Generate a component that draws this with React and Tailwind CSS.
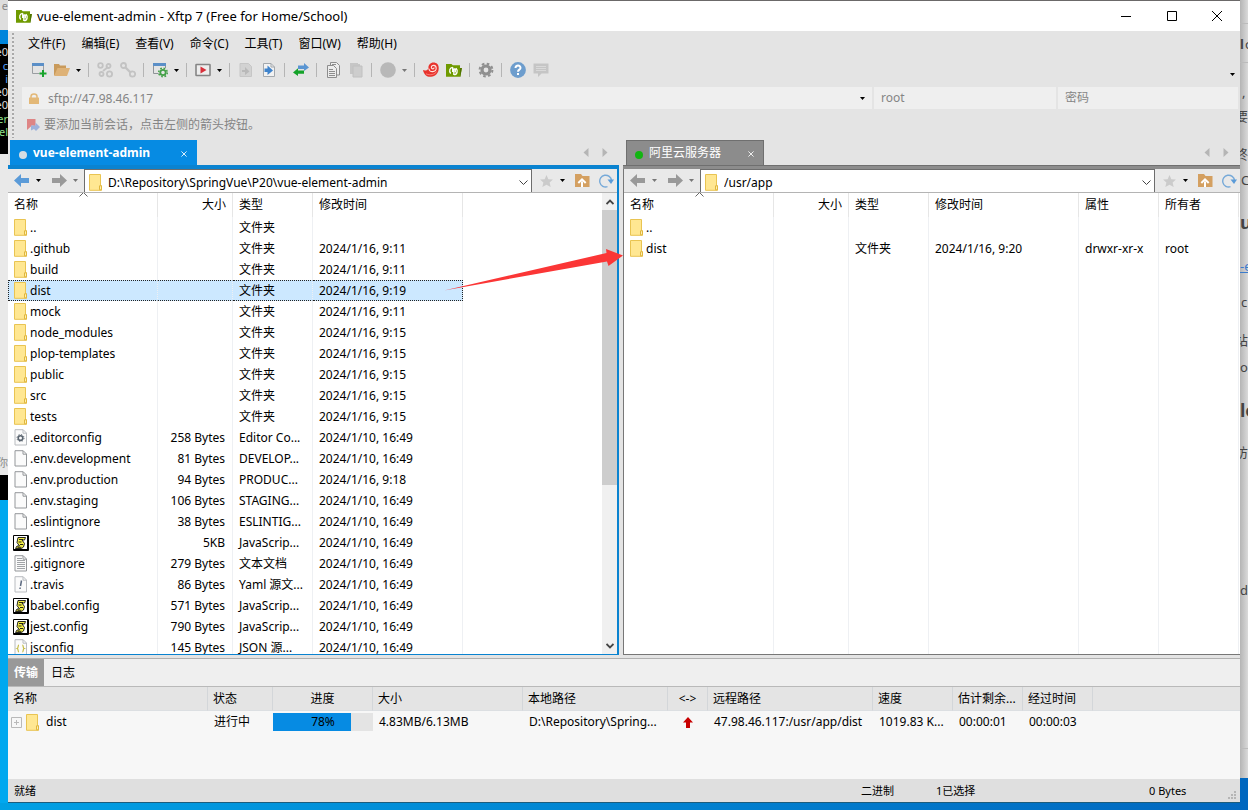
import React from 'react';

const FONT = 'font-["Noto_Sans","Noto_Sans_CJK_SC",sans-serif]';

function Caret({ className = 'text-black' }) {
  return (
    <svg width="5" height="3" viewBox="0 0 5 3" className={className} aria-hidden="true">
      <path d="M0 0h5L2.5 3z" fill="currentColor" />
    </svg>
  );
}

function FolderIcon() {
  return (
    <svg width="14" height="17" viewBox="0 0 14 17" className="shrink-0" aria-hidden="true">
      <path d="M.5.5h11v11.3h1v4.5H.5z" fill="#ffe792" stroke="#e9c452" />
      <path d="M10.5 15.8v-4h2v4z" fill="#fff0b0" stroke="#e0b63c" />
    </svg>
  );
}

function PageIcon({ children, light }) {
  return (
    <svg width="14" height="17" viewBox="0 0 14 17" className="shrink-0" aria-hidden="true">
      <path d="M1 .7h8.2l3.3 3.3v12H1z" fill="#fbfbfb" stroke={light ? '#b9bcc0' : '#94979a'} />
      <path d="M9 .9V4.200h3.300" fill="none" stroke={light ? '#b9bcc0' : '#94979a'} />
      {children}
    </svg>
  );
}

function ScriptIcon() {
  return (
    <svg width="16" height="16" viewBox="0 0 16 16" className="shrink-0" aria-hidden="true">
      <path d="M.5.500h15v15H.5z" fill="#fff" stroke="#000" />
      <path d="M14.500 1v14.500M1 14.500h14" stroke="#000" />
      <path d="M5 2.500h7.500l-1 2.500H9l2.500 3.500-1 3.500-2 1.500H2.500l1.500-2.500h2.500L4 7.500z" fill="#f3ee4a" stroke="#111" strokeWidth=".9" />
      <path d="M6 4.500h4M5.500 7h3M7 9.500h3M4.500 12.300h4" stroke="#111" strokeWidth=".9" />
    </svg>
  );
}

function FileIcon({ kind }) {
  if (kind === 'folder') return <FolderIcon />;
  if (kind === 'script') return <ScriptIcon />;
  if (kind === 'gear')
    return (
      <PageIcon light>
        <circle cx="6.500" cy="9" r="2.300" fill="none" stroke="#5b6570" strokeWidth="1.600" />
        <circle cx="6.500" cy="9" r="3.500" fill="none" stroke="#5b6570" strokeDasharray="1.300 1.450" />
      </PageIcon>
    );
  if (kind === 'text')
    return (
      <PageIcon>
        <path d="M3 5.500h8M3 7.500h8M3 9.500h8M3 11.500h8M3 13.500h8M3 3.500h5" stroke="#a1a4a7" />
      </PageIcon>
    );
  if (kind === 'yaml')
    return (
      <PageIcon light>
        <path d="M7.500 4.500 6.500 10M6.200 11.500 6 13" stroke="#5d6a80" strokeWidth="1.500" />
      </PageIcon>
    );
  if (kind === 'json')
    return (
      <PageIcon light>
        <path d="M5 6C3.500 6 4.800 9 3.200 9.500 4.800 10 3.500 13 5 13M8.300 6c1.500 0 .2 3 1.800 3.500-1.600.5-.3 3.500-1.800 3.500" fill="none" stroke="#c3b93e" strokeWidth="1.200" />
      </PageIcon>
    );
  return <PageIcon />;
}

function XftpLogo() {
  return (
    <svg width="16" height="13" viewBox="0 0 16 13" aria-hidden="true">
      <path d="M0 0h5.500l1.200 1.300H14V4h1.900L14.300 12.700H0z" fill="#6f9a00" />
      <path d="M14 4h1.900L14.300 12.700H14z" fill="#4f7300" />
      <path d="M6.700 3.200V8M6.700 3.300C3.700 3.300 2.800 7.200 4.700 9.500M7.800 11V5.200h1v-1M8 10.700C11.500 10.500 12 6.500 10 4.300M9.300 4.500v4" fill="none" stroke="#fff" strokeWidth="1.300" />
    </svg>
  );
}

const ICONS = {
  newSession: (
    <>
      <path d="M1.500 2v9.500h7M12.500 2v6" fill="none" stroke="#9a9ea2" />
      <path d="M1 1h12v3H1z" fill="#5b8fc7" />
      <path d="M12 8v7M8.500 11.500h7" stroke="#18a32c" strokeWidth="2" />
    </>
  ),
  open: (
    <>
      <path d="M0 2h5l1 1.500h6V13H0z" fill="#c99a5b" />
      <path d="M3.500 6H16l-3 8H0z" fill="#deb277" />
    </>
  ),
  reconnect: (
    <g fill="none" stroke="#c3c3c3" strokeWidth="1.800">
      <circle cx="3.500" cy="3.500" r="2.300" />
      <circle cx="11.500" cy="4" r="2" />
      <circle cx="4.500" cy="12" r="2" />
      <circle cx="12.500" cy="12" r="2.600" />
      <path d="M6 9l5-4" />
    </g>
  ),
  disconnect: (
    <g fill="none" stroke="#c3c3c3" strokeWidth="1.800">
      <circle cx="3.500" cy="3.500" r="2.500" />
      <circle cx="12.500" cy="12" r="2.700" />
      <path d="M5.500 5.500l5 5" strokeWidth="2.400" />
    </g>
  ),
  properties: (
    <>
      <path d="M1.500 2v9.500h5M13.500 2v4" fill="none" stroke="#8f9498" />
      <path d="M1 1h13v3H1z" fill="#5b8fc7" />
      <circle cx="11" cy="10.500" r="2.700" fill="none" stroke="#43a047" strokeWidth="1.800" />
      <circle cx="11" cy="10.500" r="4.300" fill="none" stroke="#43a047" strokeWidth="1.500" strokeDasharray="1.700 1.680" />
    </>
  ),
  run: (
    <>
      <rect x="1" y="2.500" width="14" height="11" rx=".5" fill="#ededed" stroke="#858585" strokeWidth="1.600" />
      <path d="M5.500 4.500 11.500 8l-6 3.500z" fill="#d8303b" />
    </>
  ),
  local: (
    <>
      <path d="M2 1.500h8.500l3 3v10H2z" fill="#d2d2d2" stroke="#c6c6c6" />
      <path d="M4 8h3V5l4.500 4.500L7 13v-3H4z" fill="#b9b9b9" />
    </>
  ),
  remote: (
    <>
      <path d="M2.500 1.500H10l3.500 3.500v9.500h-11z" fill="#f2f2f2" stroke="#a3a8ad" />
      <path d="M10 1.500V5h3.500" fill="none" stroke="#a3a8ad" />
      <path d="M3.500 6.500h3v-3L12 8.500l-5.500 4.500v-3h-3z" fill="#3f83cc" />
    </>
  ),
  sync: (
    <>
      <path d="M5 3.500h6V1l5 4.500L11 9V7H5z" fill="#5a95d2" />
      <path d="M11 8.500H5V6.200L0 10.500 5 14v-2.200h6z" fill="#15a32a" />
    </>
  ),
  copy: (
    <>
      <path d="M5.500.500h6l3 3V13h-9z" fill="#ececec" stroke="#8d8d8d" />
      <path d="M2.500 3.500h6l3 3v9h-9z" fill="#ececec" stroke="#8d8d8d" />
      <path d="M4 7.500h4M4 9.500h6M4 11.500h6M4 13.500h6M7 2.500h4" stroke="#8d8d8d" />
    </>
  ),
  paste: (
    <>
      <path d="M2 1h8v1h2v10H2z" fill="#c6c6c6" />
      <path d="M5 4h9v11H5z" fill="#cdcdcd" stroke="#c0c0c0" />
    </>
  ),
  stop: <circle cx="8" cy="8" r="7.800" fill="#b8b8b8" />,
  shell: (
    <>
      <path d="M0 8C1 13.500 5 15.300 8 14.700 12.500 14.500 15.600 11 15.700 6.500 16 2.500 13.500.5 10.500.5 7.500.5 5 3 5.500 6.200 4.500 8.500 2 9 0 8z" fill="#e8332d" />
      <path d="M5.700 6.500c1 4.500 7.300 4 7.500-.2C13.200 2.800 8.600 2.400 8.300 5.300c0 2 2.800 2.200 2.800.3" fill="none" stroke="#ffe3e0" strokeWidth="1.100" />
      <path d="M3 11.800c4 2 9 .7 10.700-2.300" fill="none" stroke="#ff9e98" strokeWidth=".7" />
    </>
  ),
  gear: (
    <>
      <circle cx="8" cy="8" r="4" fill="none" stroke="#909090" strokeWidth="3.200" />
      <circle cx="8" cy="8" r="6.400" fill="none" stroke="#909090" strokeWidth="2" strokeDasharray="2.600 2.427" />
    </>
  ),
  help: (
    <>
      <circle cx="8" cy="8" r="7.900" fill="#6d9dcd" />
      <path d="M5.500 6c0-3.400 5.200-3.200 5 0-.1 1.700-2.500 1.600-2.500 3.700M8 11v2" fill="none" stroke="#fff" strokeWidth="2" />
    </>
  ),
  chat: (
    <>
      <path d="M.5 1.500h15v10H8.500L5 15v-3.500H.5z" fill="#c5c5c5" />
      <path d="M3 4.500h10M3 6.500h10M3 8.500h10" stroke="#d9d9d9" />
    </>
  ),
};

const TOOLBAR = [
  ['newSession', '新建'], ['open', '打开'], 'caret', 'sep',
  ['reconnect', '重新连接'], ['disconnect', '断开'], 'sep',
  ['properties', '属性'], 'caret', 'sep',
  ['run', '运行'], 'caret', 'sep',
  ['local', '本地'], ['remote', '远程'], 'sep',
  ['sync', '同步'], 'sep',
  ['copy', '复制'], ['paste', '粘贴'], 'sep',
  ['stop', '停止'], 'dimCaret', 'sep',
  ['shell', 'Xshell'], ['xftp', 'Xftp'], 'sep',
  ['gear', '选项'], 'sep',
  ['help', '帮助'], ['chat', '反馈'],
];

function Toolbar() {
  return (
    <div className="flex h-7 items-center pl-[13px]">
      {TOOLBAR.map((item, i) => {
        if (item === 'sep')
          return (
            <span key={i} className="flex w-[9px] justify-center">
              <span className="h-[14px] w-px bg-[#b5b5b5]" />
            </span>
          );
        if (item === 'caret' || item === 'dimCaret')
          return (
            <button key={i} aria-label="更多" className="flex h-5 w-[11px] items-center justify-center">
              <Caret className={item === 'caret' ? 'text-black' : 'text-[#777]'} />
            </button>
          );
        return (
          <button key={i} aria-label={item[1]} className="flex h-5 w-[23px] items-center justify-center">
            {item[0] === 'xftp' ? <XftpLogo /> : (
              <svg width="16" height="16" viewBox="0 0 16 16" aria-hidden="true">{ICONS[item[0]]}</svg>
            )}
          </button>
        );
      })}
      <button aria-label="工具栏选项" className="mt-2 mr-1 ml-auto p-px"><Caret /></button>
    </div>
  );
}

function NavArrow({ back, active }) {
  return (
    <svg width="16" height="13" viewBox="0 0 16 13" className={active ? 'text-[#5b9bd8]' : 'text-[#999]'} aria-hidden="true">
      <path d={back ? 'M7 0v4h8v5H7v4L0 6.500z' : 'M9 0v4H1v5h8v4l7-6.500z'} fill="currentColor" />
    </svg>
  );
}

function TabScroll() {
  return (
    <div className="mr-[11px] ml-auto flex items-center gap-[13px] text-[#b5b5b5]">
      <button aria-label="上一个">
        <svg width="6" height="9" viewBox="0 0 6 9"><path d="M5.500 0v9L.5 4.500z" fill="currentColor" /></svg>
      </button>
      <button aria-label="下一个">
        <svg width="6" height="9" viewBox="0 0 6 9"><path d="M.5 0v9l5-4.500z" fill="currentColor" /></svg>
      </button>
    </div>
  );
}

function CloseGlyph() {
  return (
    <svg width="6" height="6" viewBox="0 0 7 7" aria-hidden="true">
      <path d="M.5.5l6 6M6.500.5l-6 6" stroke="#fff" />
    </svg>
  );
}

function NavBar({ path, local }) {
  return (
    <div className="flex h-[24px] shrink-0 items-center border-b border-[#b4b4b4] bg-[#e9e9e9]">
      <button aria-label="后退" className="ml-[6px]"><NavArrow back active={local} /></button>
      <button aria-label="后退历史" className="flex w-4 justify-center"><Caret className={local ? 'text-black' : 'text-[#777]'} /></button>
      <button aria-label="前进" className="ml-[5px]"><NavArrow /></button>
      <button aria-label="前进历史" className="flex w-4 justify-center"><Caret className="text-[#777]" /></button>
      <div className="ml-px flex h-full flex-1 items-center border border-b-0 border-[#6d6d6d] bg-white pt-[3px] pl-1">
        <FolderIcon />
        <input aria-label="路径" defaultValue={path} className="ml-[5px] h-5 min-w-0 flex-1 bg-transparent outline-none" />
        <button aria-label="展开路径" className="mr-[3px]">
          <svg width="9" height="5" viewBox="0 0 9 5"><path d="M.5.5l4 4 4-4" fill="none" stroke="#444" /></svg>
        </button>
      </div>
      <button aria-label="收藏" className="ml-2">
        <svg width="13" height="12" viewBox="0 0 14 13"><path d="M7 0l2 4.500 5 .5-3.600 3.200L11.500 13 7 10.500 2.500 13l1.100-4.800L0 5l5-.5z" fill="#cbcbcb" /></svg>
      </button>
      <button aria-label="收藏列表" className="flex w-[18px] justify-center"><Caret /></button>
      <button aria-label="上级目录" className="ml-1">
        <svg width="15" height="13" viewBox="0 0 15 13">
          <path d="M0 0h6l1.500 2H14.500v11H0z" fill="#d4a061" />
          <path d="M7 13V7.500M3.300 9 7 5.300 10.700 9" fill="none" stroke="#fff" strokeWidth="2" />
        </svg>
      </button>
      <button aria-label="刷新" className="mr-[3px] ml-[9px]">
        <svg width="15" height="14" viewBox="0 0 15 14">
          <path d="M8.500 12.700a5.900 5.900 0 1 1 4-6.200" fill="none" stroke="#76a9d8" strokeWidth="1.400" />
          <path d="M8.500 5.500H15L12 10z" fill="#5b9bd8" />
        </svg>
      </button>
    </div>
  );
}

const HEAD = 'relative h-6 border-r border-[#e6e6e6] px-[6px] text-left font-normal last:border-r-0';
const CELL = 'h-[21px] truncate border-r border-[#eef0f3] last:border-r-0';

function FileTable({ columns, rows, selected, label }) {
  return (
    <table aria-label={label} className="h-full w-full table-fixed border-separate border-spacing-0">
      <colgroup>
        {columns.map((c) => <col key={c.key} className={c.width} />)}
        <col />
      </colgroup>
      <thead>
        <tr>
          {columns.map((c) => (
            <th key={c.key} className={HEAD}>
              <span className={c.right ? 'block text-right' : 'block'}>{c.title}</span>
              {c.sorted && (
                <svg width="9" height="5" viewBox="0 0 9 5" className="absolute -top-px left-[71px]">
                  <path d="M.5 4.500l4-4 4 4" fill="none" stroke="#666" />
                </svg>
              )}
            </th>
          ))}
          <th className={HEAD} />
        </tr>
      </thead>
      <tbody>
        {rows.map((r) => {
          const on = r.name === selected;
          const tone = on ? ' border-y border-dotted border-y-[#222] bg-[#cce8ff] leading-[18px]' : ' leading-[20px]';
          return (
            <tr key={r.name} aria-selected={on}>
              {columns.map((c, i) => (
                <td
                  key={c.key}
                  className={
                    CELL + tone + (c.right ? ' pr-[7px] text-right' : c.key === 'name' ? ' pl-[5px]' : ' pl-[6px]') +
                    (on && i === 0 ? ' border-l !border-l-[#222]' : '') +
                    (on && i === columns.length - 1 ? ' !border-r-[#222]' : '')
                  }
                >
                  {c.key === 'name' ? (
                    <span className="flex items-center">
                      <span className={on ? '-ml-px flex w-4 shrink-0 justify-center' : 'flex w-4 shrink-0 justify-center'}>
                        <FileIcon kind={r.icon} />
                      </span>
                      <span className="ml-px">{r.name}</span>
                    </span>
                  ) : r[c.key]}
                </td>
              ))}
              <td className={CELL} />
            </tr>
          );
        })}
        <tr aria-hidden="true">
          {columns.map((c) => <td key={c.key} className="border-r border-[#eef0f3]" />)}
          <td />
        </tr>
      </tbody>
    </table>
  );
}

const f = (name, time) => ({ name, time, icon: 'folder', type: '文件夹' });
const LOCAL_ROWS = [
  f('..', ''),
  f('.github', '2024/1/16, 9:11'),
  f('build', '2024/1/16, 9:11'),
  f('dist', '2024/1/16, 9:19'),
  f('mock', '2024/1/16, 9:11'),
  f('node_modules', '2024/1/16, 9:15'),
  f('plop-templates', '2024/1/16, 9:15'),
  f('public', '2024/1/16, 9:15'),
  f('src', '2024/1/16, 9:15'),
  f('tests', '2024/1/16, 9:15'),
  { name: '.editorconfig', icon: 'gear', size: '258 Bytes', type: 'Editor Co...', time: '2024/1/10, 16:49' },
  { name: '.env.development', icon: 'page', size: '81 Bytes', type: 'DEVELOP...', time: '2024/1/10, 16:49' },
  { name: '.env.production', icon: 'page', size: '94 Bytes', type: 'PRODUC...', time: '2024/1/16, 9:18' },
  { name: '.env.staging', icon: 'page', size: '106 Bytes', type: 'STAGING...', time: '2024/1/10, 16:49' },
  { name: '.eslintignore', icon: 'page', size: '38 Bytes', type: 'ESLINTIG...', time: '2024/1/10, 16:49' },
  { name: '.eslintrc', icon: 'script', size: '5KB', type: 'JavaScrip...', time: '2024/1/10, 16:49' },
  { name: '.gitignore', icon: 'text', size: '279 Bytes', type: '文本文档', time: '2024/1/10, 16:49' },
  { name: '.travis', icon: 'yaml', size: '86 Bytes', type: 'Yaml 源文...', time: '2024/1/10, 16:49' },
  { name: 'babel.config', icon: 'script', size: '571 Bytes', type: 'JavaScrip...', time: '2024/1/10, 16:49' },
  { name: 'jest.config', icon: 'script', size: '790 Bytes', type: 'JavaScrip...', time: '2024/1/10, 16:49' },
  { name: 'jsconfig', icon: 'json', size: '145 Bytes', type: 'JSON 源...', time: '2024/1/10, 16:49' },
];
const REMOTE_ROWS = [
  { name: '..', icon: 'folder' },
  { name: 'dist', icon: 'folder', type: '文件夹', time: '2024/1/16, 9:20', mode: 'drwxr-xr-x', owner: 'root' },
];
const BASE_COLUMNS = [
  { key: 'name', title: '名称', width: 'w-[150px]', sorted: true },
  { key: 'size', title: '大小', width: 'w-[75px]', right: true },
  { key: 'type', title: '类型', width: 'w-[80px]' },
  { key: 'time', title: '修改时间', width: 'w-[150px]' },
];
const REMOTE_COLUMNS = [
  ...BASE_COLUMNS,
  { key: 'mode', title: '属性', width: 'w-[80px]' },
  { key: 'owner', title: '所有者', width: 'w-[80px]' },
];

function ScrollBar() {
  return (
    <div aria-hidden="true" className="flex w-[15px] shrink-0 flex-col bg-[#f0f0f0]">
      <span className="flex h-[17px] items-center justify-center">
        <svg width="8" height="6" viewBox="0 0 8 6"><path d="M.5 5 4 1.500 7.500 5" fill="none" stroke="#444" strokeWidth="1.800" /></svg>
      </span>
      <span className="flex-[276] bg-[#cdcdcd]" />
      <span className="flex-[153]" />
      <span className="flex h-4 items-center justify-center">
        <svg width="8" height="6" viewBox="0 0 8 6"><path d="M.5 1 4 4.500 7.500 1" fill="none" stroke="#444" strokeWidth="1.800" /></svg>
      </span>
    </div>
  );
}

const TRANSFER = [
  ['名称', 'w-[200px]'], ['状态', 'w-[65px]'], ['进度', 'w-[100px]'], ['大小', 'w-[150px]'], ['本地路径', 'w-[145px]'],
  ['<->', 'w-[40px]'], ['远程路径', 'w-[165px]'], ['速度', 'w-[80px]'], ['估计剩余...', 'w-[70px]'], ['经过时间', 'w-[70px]'],
];
const TD = 'h-[22px] truncate px-[6px]';

function TransferTable() {
  return (
    <table aria-label="传输" className="w-full table-fixed border-separate border-spacing-0">
      <colgroup>
        {TRANSFER.map(([t, w]) => <col key={t} className={w} />)}
        <col />
      </colgroup>
      <thead className="bg-[#e4e4e4]">
        <tr>
          {TRANSFER.map(([t], i) => (
            <th
              key={t}
              className={
                'h-6 truncate border-r border-b border-r-[#d3d6d9] border-b-[#dcdfe2] px-[5px] font-normal ' +
                (i === 2 || i === 5 ? 'text-center' : 'text-left')
              }
            >
              {t}
            </th>
          ))}
          <th className="border-b border-[#dcdfe2]" />
        </tr>
      </thead>
      <tbody>
        <tr>
          <td className="h-[22px] pl-[3px]">
            <span className="flex items-center">
              <button aria-label="展开" className="mr-1">
                <svg width="11" height="11" viewBox="0 0 11 11"><path d="M.5.5h10v10H.5zM3 5.500h5M5.500 3v5" fill="none" stroke="#b9b9b9" /></svg>
              </button>
              <FolderIcon />
              <span className="ml-[6px]">dist</span>
            </span>
          </td>
          <td className={TD}>进行中</td>
          <td className="h-[22px]">
            <div role="progressbar" aria-valuenow={78} aria-valuemin={0} aria-valuemax={100} className="relative h-[18px] bg-[#e4e4e4]">
              <div className="h-full bg-[#068be3]" style={{ width: '78%' }} />
              <span className="absolute inset-0 text-center leading-[17px]">78%</span>
            </div>
          </td>
          <td className={TD}>4.83MB/6.13MB</td>
          <td className={TD}>D:\Repository\Spring...</td>
          <td>
            <svg width="10" height="11" viewBox="0 0 10 11" className="mx-auto"><path d="M5 0l5 5.500H7V11H3V5.500H0z" fill="#c80000" /></svg>
          </td>
          <td className={TD}>47.98.46.117:/usr/app/dist</td>
          <td className={TD}>1019.83 K...</td>
          <td className={TD}>00:00:01</td>
          <td className={TD}>00:00:03</td>
          <td />
        </tr>
      </tbody>
    </table>
  );
}

function LeftDesktop() {
  return (
    <div aria-hidden="true" className="relative w-2 shrink-0 overflow-hidden bg-[#00a8ef] text-[11px] leading-3">
      <div className="h-[30px] bg-[#dedede]"><span className="absolute top-0 right-0 text-[#888]">e</span></div>
      <div className="h-[14px] bg-[#0085dc]" />
      <div className="h-[110px] bg-black" />
      <div className="h-[321px] bg-[#e9e9e9]" />
      <div className="h-[25px] bg-black" />
      <span className="absolute top-[46px] right-0 text-[#ddd]">e0</span>
      <span className="absolute top-[60px] right-0 text-[#59a3ff]">c</span>
      <span className="absolute top-[73px] right-0 text-[#59a3ff]">i</span>
      <span className="absolute top-[86px] right-0 text-[#ddd]">e0</span>
      <span className="absolute top-[99px] right-0 text-[#ddd]">e0</span>
      <span className="absolute top-[113px] right-0 text-[#8be08b]">er</span>
      <span className="absolute top-[126px] right-0 text-[#8be08b]">el</span>
      <span className="absolute top-[457px] right-0 text-[#888]">你</span>
    </div>
  );
}

function RightDesktop() {
  return (
    <div aria-hidden="true" className="relative w-2 shrink-0 overflow-hidden bg-[#0067bf] text-[13px] leading-5 whitespace-nowrap text-[#444]">
      <div className="h-[778px] bg-gradient-to-r from-[#b5b5b5] to-[#dadada]" />
      <span className="absolute inset-x-0 top-[23px] h-px bg-[#bbb]" />
      <span className="absolute inset-x-0 top-[62px] h-px bg-[#bbb]" />
      <span className="absolute inset-x-0 top-[748px] h-px bg-[#bbb]" />
      <span className="absolute top-[34px] left-0 font-bold">l</span>
      <span className="absolute top-[34px] left-[5px]">o</span>
      <span className="absolute top-[82px] left-[2px]">,</span>
      <span className="absolute top-[106px] left-[-5px]">要</span>
      <span className="absolute top-[144px] left-[-5px]">终</span>
      <span className="absolute top-[170px] left-[1px]">C</span>
      <span className="absolute top-[212px] left-0 text-[18px] font-bold">u</span>
      <span className="absolute top-[256px] left-0 text-[#3b7bcb] underline">-e</span>
      <span className="absolute top-[292px] left-[1px]">c</span>
      <span className="absolute top-[330px] left-[-5px]">站</span>
      <span className="absolute top-[357px] left-0">o</span>
      <span className="absolute top-[400px] left-0 text-[18px] font-bold">le</span>
      <span className="absolute top-[442px] left-[-5px]">访</span>
      <span className="absolute top-[580px] left-0">d</span>
    </div>
  );
}

export default function App() {
  return (
    <div className={`flex h-screen flex-col overflow-hidden text-[12px] leading-4 text-black ${FONT}`}>
      <div className="flex min-h-0 flex-1">
        <LeftDesktop />
        <main className="flex min-w-0 flex-1 flex-col border-t border-b border-t-[#6b6969] border-b-[#1c5c7c] bg-[#e4e4e4]">
          <header className="flex h-[30px] shrink-0 items-center bg-white pl-2">
            <XftpLogo />
            <h1 className="ml-[5px] text-[13px]">vue-element-admin - Xftp 7 (Free for Home/School)</h1>
            <div className="ml-auto flex h-full">
              <button aria-label="最小化" className="flex w-[46px] items-center justify-center">
                <svg width="10" height="10" viewBox="0 0 10 10"><path d="M0 5.500h10" stroke="#000" /></svg>
              </button>
              <button aria-label="最大化" className="flex w-[45px] items-center justify-center">
                <svg width="10" height="10" viewBox="0 0 10 10"><path d="M.5.5h9v9h-9z" fill="none" stroke="#000" /></svg>
              </button>
              <button aria-label="关闭" className="flex w-[46px] items-center justify-center">
                <svg width="10" height="10" viewBox="0 0 10 10"><path d="M0 0l10 10M10 0 0 10" stroke="#000" /></svg>
              </button>
            </div>
          </header>

          <div className="flex shrink-0">
            <div className="my-[2px] ml-1 w-[2px] bg-[repeating-linear-gradient(#a9a9a9_0_2px,#e9e9e9_2px_4px)]" />
            <div className="min-w-0 flex-1">
              <nav className="flex h-[25px] items-center gap-4 pl-[14px]">
                {['文件(F)', '编辑(E)', '查看(V)', '命令(C)', '工具(T)', '窗口(W)', '帮助(H)'].map((m) => <button key={m}>{m}</button>)}
              </nav>
              <Toolbar />
              <div className="mt-[3px] mr-[2px] ml-2 flex h-[22px] gap-[2px] text-[#858585]">
                <div className="flex min-w-0 flex-1 items-center bg-[#efefef] pl-[7px]">
                  <svg width="10" height="11" viewBox="0 0 10 11" aria-hidden="true">
                    <path d="M2 5V3.500C2 .2 8 .2 8 3.500V5" fill="none" stroke="#e3b877" strokeWidth="1.500" />
                    <rect y="4.500" width="10" height="6.500" rx=".5" fill="#e3b877" />
                  </svg>
                  <input aria-label="地址" defaultValue="sftp://47.98.46.117" className="ml-[9px] h-full min-w-0 flex-1 bg-transparent outline-none" />
                  <button aria-label="地址历史" className="mr-[7px]"><Caret /></button>
                </div>
                <input aria-label="用户名" defaultValue="root" className="w-[182px] shrink-0 bg-[#efefef] px-[7px] outline-none" />
                <input aria-label="密码" placeholder="密码" className="w-[180px] shrink-0 bg-[#efefef] px-[7px] outline-none placeholder:text-[#858585]" />
              </div>
              <p className="flex h-[31px] items-center pl-[13px] text-[#858585]">
                <svg width="13" height="12" viewBox="0 0 13 12" className="mr-[4px]" aria-hidden="true">
                  <path d="M0 0h8.500v7L5 6.500 0 11z" fill="#de8585" />
                  <path d="M8.500 3.500 13 8 9 12 7 10 4 11.500V6.500h4.500z" fill="#9eb2dc" />
                </svg>
                要添加当前会话，点击左侧的箭头按钮。
              </p>
            </div>
          </div>

          <div className="relative grid min-h-0 flex-1 grid-cols-[611fr_617fr] gap-1">
            <section className="flex min-h-0 min-w-0 flex-col">
              <div className="flex h-[25px] shrink-0">
                <div className="ml-[2px] flex w-[187px] items-center bg-[#068be3] pt-px pl-[9px] text-white">
                  <span className="mt-[3px] size-2 rounded-full bg-[#d5dde3]" />
                  <button className="ml-[6px] font-bold">vue-element-admin</button>
                  <button aria-label="关闭标签" className="mr-[10px] ml-auto pt-[2px]"><CloseGlyph /></button>
                </div>
                <TabScroll />
              </div>
              <div className="h-1 shrink-0 bg-[#0a83d0]" />
              <div className="flex min-h-0 flex-1 flex-col border-r-2 border-b border-[#0a83d0]">
                <NavBar local path={'D:\\Repository\\SpringVue\\P20\\vue-element-admin'} />
                <div className="flex min-h-0 flex-1 bg-white">
                  <div className="min-w-0 flex-1 overflow-hidden">
                    <FileTable label="本地文件" columns={BASE_COLUMNS} rows={LOCAL_ROWS} selected="dist" />
                  </div>
                  <ScrollBar />
                </div>
              </div>
            </section>

            <section className="flex min-h-0 min-w-0 flex-col">
              <div className="flex h-[25px] shrink-0">
                <div className="ml-[3px] flex w-[138px] items-center border border-b-0 border-[#6f6f6f] bg-[#8c8c8c] pl-2 text-white">
                  <span className="mt-[3px] size-2 rounded-full bg-[#12b512]" />
                  <button className="ml-[6px]">阿里云服务器</button>
                  <button aria-label="关闭标签" className="mr-[9px] ml-auto pt-[2px]"><CloseGlyph /></button>
                </div>
                <TabScroll />
              </div>
              <div className="h-1 shrink-0 border-t border-[#6f6f6f] bg-[#8c8c8c]" />
              <div className="flex min-h-0 flex-1 flex-col border-b border-l border-[#777]">
                <NavBar path="/usr/app" />
                <div className="min-h-0 flex-1 bg-white">
                  <FileTable label="远程文件" columns={REMOTE_COLUMNS} rows={REMOTE_ROWS} />
                </div>
              </div>
            </section>

            <svg width="186" height="48" viewBox="0 0 186 48" className="pointer-events-none absolute top-[106px] left-[432px]" aria-hidden="true">
              <path d="M4 44.500 166.500 7 166 3 183 9.500 168.500 20 167 15.500z" fill="#fb3636" />
            </svg>
          </div>

          <section className="mt-[3px] shrink-0 border-t border-[#b0b0b0] bg-[#f7f7f7]">
            <div className="flex h-7 border-b border-[#b9b9b9] bg-[#efefef]">
              <button className="w-9 bg-[#999] font-bold text-white">传输</button>
              <button className="px-[7px]">日志</button>
            </div>
            <div className="min-h-[92px]"><TransferTable /></div>
          </section>
          <footer className="relative flex h-[23px] shrink-0 items-center bg-[#dfdfdf] text-[11px]">
            <span className="min-w-0 flex-1 pl-[6px]">就绪</span>
            <span className="w-[75px]">二进制</span>
            <span className="w-[213px]">1已选择</span>
            <span className="w-[91px]">0 Bytes</span>
            <svg width="9" height="9" viewBox="0 0 9 9" className="absolute right-[3px] bottom-[2px]" aria-hidden="true">
              <path d="M6 0h2v2H6zM3 3h2v2H3zM6 3h2v2H6zM0 6h2v2H0zM3 6h2v2H3zM6 6h2v2H6z" fill="#b5b5b5" />
            </svg>
          </footer>
        </main>
        <RightDesktop />
      </div>
      <div className="h-[7px] shrink-0 bg-gradient-to-r from-[#00a0e4] to-[#0067bf]" />
    </div>
  );
}
